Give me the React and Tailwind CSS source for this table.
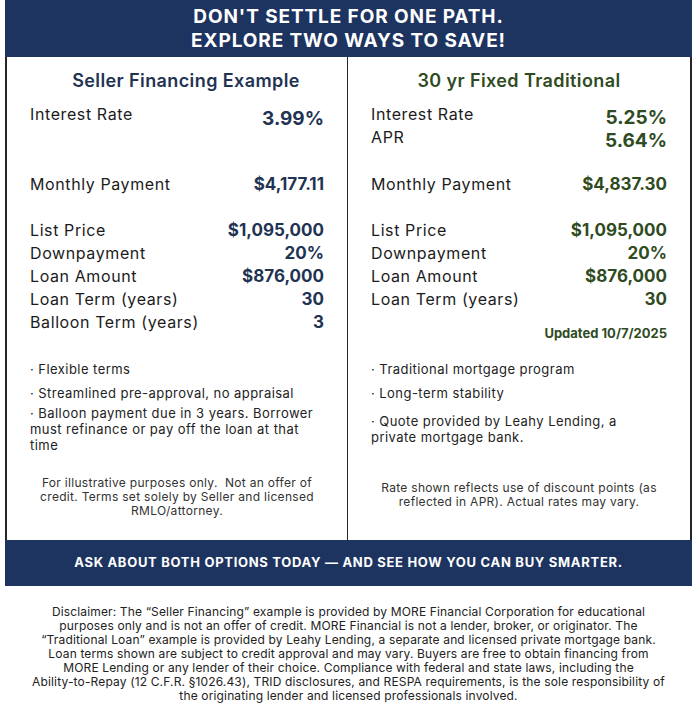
const navy = "text-[#1f3352]";
const green = "text-[#2f4b1f]";

const Row = ({ label, value, color }) => (
    <div className="flex justify-between items-center h-[23px]">
        <span className="text-[16px] leading-[20px] tracking-[0.6px] text-[#1b1b1b]">{label}</span>
        <span className={`text-[17px] leading-[20px] font-bold ${color}`}>{value}</span>
    </div>
);

const Bullet = ({ children, className = "" }) => (
    <p className={`text-[13px] leading-[16px] tracking-[0.45px] text-[#222] ${className}`}>{children}</p>
);

export default function App() {
    return (
        <div className="w-[697px] bg-white px-[5px] pb-[10px]" style={{ fontFamily: 'Inter, sans-serif' }}>
            {/* header */}
            <div className="h-[57px] bg-[#1e3460] flex flex-col items-center justify-center text-white font-bold text-[19px] leading-[24px] tracking-[0.9px]">
                <div>DON'T SETTLE FOR ONE PATH.</div>
                <div>EXPLORE TWO WAYS TO SAVE!</div>
            </div>

            {/* two columns */}
            <div className="flex h-[483px] border-x-2 border-[#262626]">
                <div className="w-[341px] border-r border-[#262626] px-[23px] pt-[13px]">
                    <h2 className={`pl-[18px] text-center text-[18px] leading-[22px] tracking-[0.4px] font-semibold ${navy}`}>Seller Financing Example</h2>
                    <div className="mt-[11px] h-[46px]">
                        <div className="flex justify-between">
                            <span className="text-[16px] leading-[23px] tracking-[0.6px] text-[#1b1b1b]">Interest Rate</span>
                            <span className={`text-[19px] leading-[23px] mt-[4px] font-bold ${navy}`}>3.99%</span>
                        </div>
                    </div>
                    <div className="mt-[23px]">
                        <Row label="Monthly Payment" value="$4,177.11" color={navy} />
                    </div>
                    <div className="mt-[23px]">
                        <Row label="List Price" value="$1,095,000" color={navy} />
                        <Row label="Downpayment" value="20%" color={navy} />
                        <Row label="Loan Amount" value="$876,000" color={navy} />
                        <Row label="Loan Term (years)" value="30" color={navy} />
                        <Row label="Balloon Term (years)" value="3" color={navy} />
                    </div>
                    <div className="mt-[28px]">
                        <Bullet>· Flexible terms</Bullet>
                        <Bullet className="mt-[8px]">· Streamlined pre-approval, no appraisal</Bullet>
                        <Bullet className="mt-[4px]">· Balloon payment due in 3 years. Borrower<br />must refinance or pay off the loan at that<br />time</Bullet>
                    </div>
                    <p className="mt-[23px] text-center text-[12px] leading-[14px] tracking-[0.3px] text-[#333]">
                        For illustrative purposes only.&nbsp; Not an offer of<br />credit. Terms set solely by Seller and licensed<br />RMLO/attorney.
                    </p>
                </div>

                <div className="flex-1 px-[23px] pt-[13px]">
                    <h2 className={`text-center text-[18px] leading-[22px] tracking-[0.4px] font-semibold ${green}`}>30 yr Fixed Traditional</h2>
                    <div className="mt-[11px]">
                        <div className="flex justify-between h-[23px]">
                            <span className="text-[16px] leading-[23px] tracking-[0.6px] text-[#1b1b1b]">Interest Rate</span>
                            <span className={`text-[19px] leading-[23px] mt-[3px] font-bold ${green}`}>5.25%</span>
                        </div>
                        <div className="flex justify-between h-[23px]">
                            <span className="text-[16px] leading-[23px] tracking-[0.6px] text-[#1b1b1b]">APR</span>
                            <span className={`text-[19px] leading-[23px] mt-[3px] font-bold ${green}`}>5.64%</span>
                        </div>
                    </div>
                    <div className="mt-[23px]">
                        <Row label="Monthly Payment" value="$4,837.30" color={green} />
                    </div>
                    <div className="mt-[23px]">
                        <Row label="List Price" value="$1,095,000" color={green} />
                        <Row label="Downpayment" value="20%" color={green} />
                        <Row label="Loan Amount" value="$876,000" color={green} />
                        <Row label="Loan Term (years)" value="30" color={green} />
                    </div>
                    <p className={`mt-[14px] text-right text-[13px] leading-[18px] font-bold ${green}`}>Updated 10/7/2025</p>
                    <div className="mt-[19px]">
                        <Bullet>· Traditional mortgage program</Bullet>
                        <Bullet className="mt-[8px]">· Long-term stability</Bullet>
                        <Bullet className="mt-[12px]">· Quote provided by Leahy Lending, a<br />private mortgage bank.</Bullet>
                    </div>
                    <p className="mt-[36px] text-center text-[12px] leading-[14px] tracking-[0.3px] text-[#333]">
                        Rate shown reflects use of discount points (as<br />reflected in APR). Actual rates may vary.
                    </p>
                </div>
            </div>

            {/* banner */}
            <div className="h-[46px] bg-[#1e3460] flex items-center justify-center text-white font-bold text-[13px] tracking-[0.7px]">
                ASK ABOUT BOTH OPTIONS TODAY — AND SEE HOW YOU CAN BUY SMARTER.
            </div>

            {/* disclaimer */}
            <p className="mt-[19px] text-center text-[12px] leading-[14px] tracking-[0.15px] text-[#222]">
                Disclaimer: The “Seller Financing” example is provided by MORE Financial Corporation for educational<br />
                purposes only and is not an offer of credit. MORE Financial is not a lender, broker, or originator. The<br />
                “Traditional Loan” example is provided by Leahy Lending, a separate and licensed private mortgage bank.<br />
                Loan terms shown are subject to credit approval and may vary. Buyers are free to obtain financing from<br />
                MORE Lending or any lender of their choice. Compliance with federal and state laws, including the<br />
                Ability-to-Repay (12 C.F.R. §1026.43), TRID disclosures, and RESPA requirements, is the sole responsibility of<br />
                the originating lender and licensed professionals involved.
            </p>
        </div>
    );
}
